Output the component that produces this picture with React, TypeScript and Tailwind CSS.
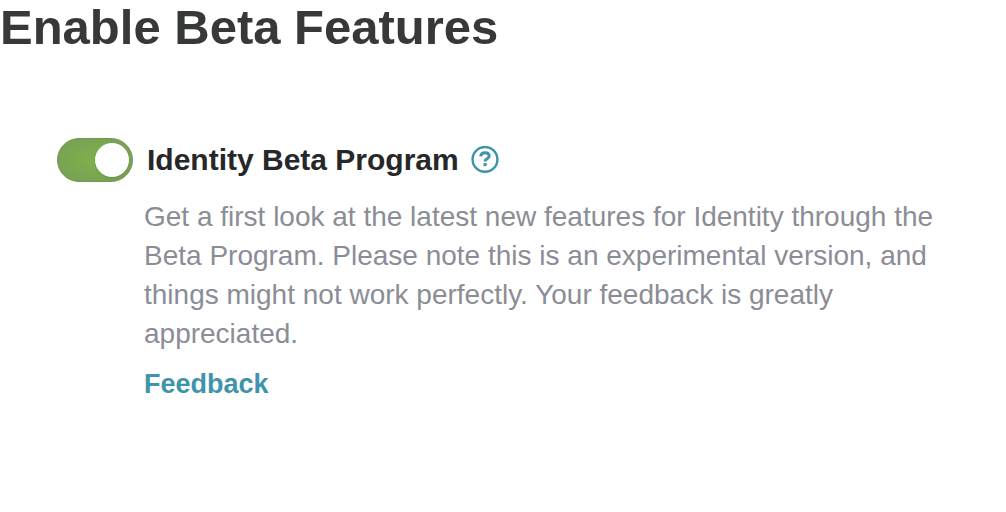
import { useState } from "react";

export default function App() {
  const [enabled, setEnabled] = useState(true);

  return (
    <main className="w-full bg-white font-['Liberation_Sans',Arial,sans-serif]">
      <h1 className="text-[49px] leading-[54px] font-bold text-[#36383a]">
        Enable Beta Features
      </h1>

      <section className="mt-21 pl-[57px] pr-12">
        <div className="flex items-center">
          <label className="flex items-center gap-3.5 cursor-pointer">
            <input
              type="checkbox"
              role="switch"
              checked={enabled}
              onChange={(e) => setEnabled(e.target.checked)}
              className="peer sr-only"
            />
            <span
              className="flex h-11 w-[76px] items-center rounded-full border border-[#719a54] bg-gray-400
              bg-radial from-gray-400 to-gray-500 px-[3px] peer-checked:justify-end
              peer-checked:from-[#80b04a] peer-checked:to-[#749f56]"
            >
              <span className="size-[34px] rounded-full bg-white shadow"></span>
            </span>
            <span className="text-[30px] leading-11 font-bold text-[#252729]">
              Identity Beta Program
            </span>
          </label>

          <button type="button" aria-label="Help" className="ml-3 text-[#3f93aa]">
            <svg
              viewBox="0 1 28 28"
              fill="none"
              stroke="currentColor"
              strokeWidth="2.4"
              className="size-7"
            >
              <circle cx="14" cy="14.4" r="12.4" />
              <path
                d="M9.7 11.4c.3-2.4 1.9-3.7 4.3-3.7 2.5 0 4.2 1.2 4.2 3.3 0 3-4.1 2.5-4.1 5.4"
                strokeWidth="3"
              />
              <path d="M12.5 18.1h3.2v3h-3.2z" fill="currentColor" stroke="none" />
            </svg>
          </button>
        </div>

        <div className="pl-[87px]">
          <p className="mt-[15px] text-[28px] leading-[39px] text-[#8b8d96]">
            Get a first look at the latest new features for Identity through the
            Beta Program. Please note this is an experimental version, and
            things might not work perfectly. Your feedback is greatly
            appreciated.
          </p>
          <a
            href="#feedback"
            className="mt-3 inline-block text-[27px] leading-[39px] font-bold text-[#3f93aa]"
          >
            Feedback
          </a>
        </div>
      </section>
    </main>
  );
}
